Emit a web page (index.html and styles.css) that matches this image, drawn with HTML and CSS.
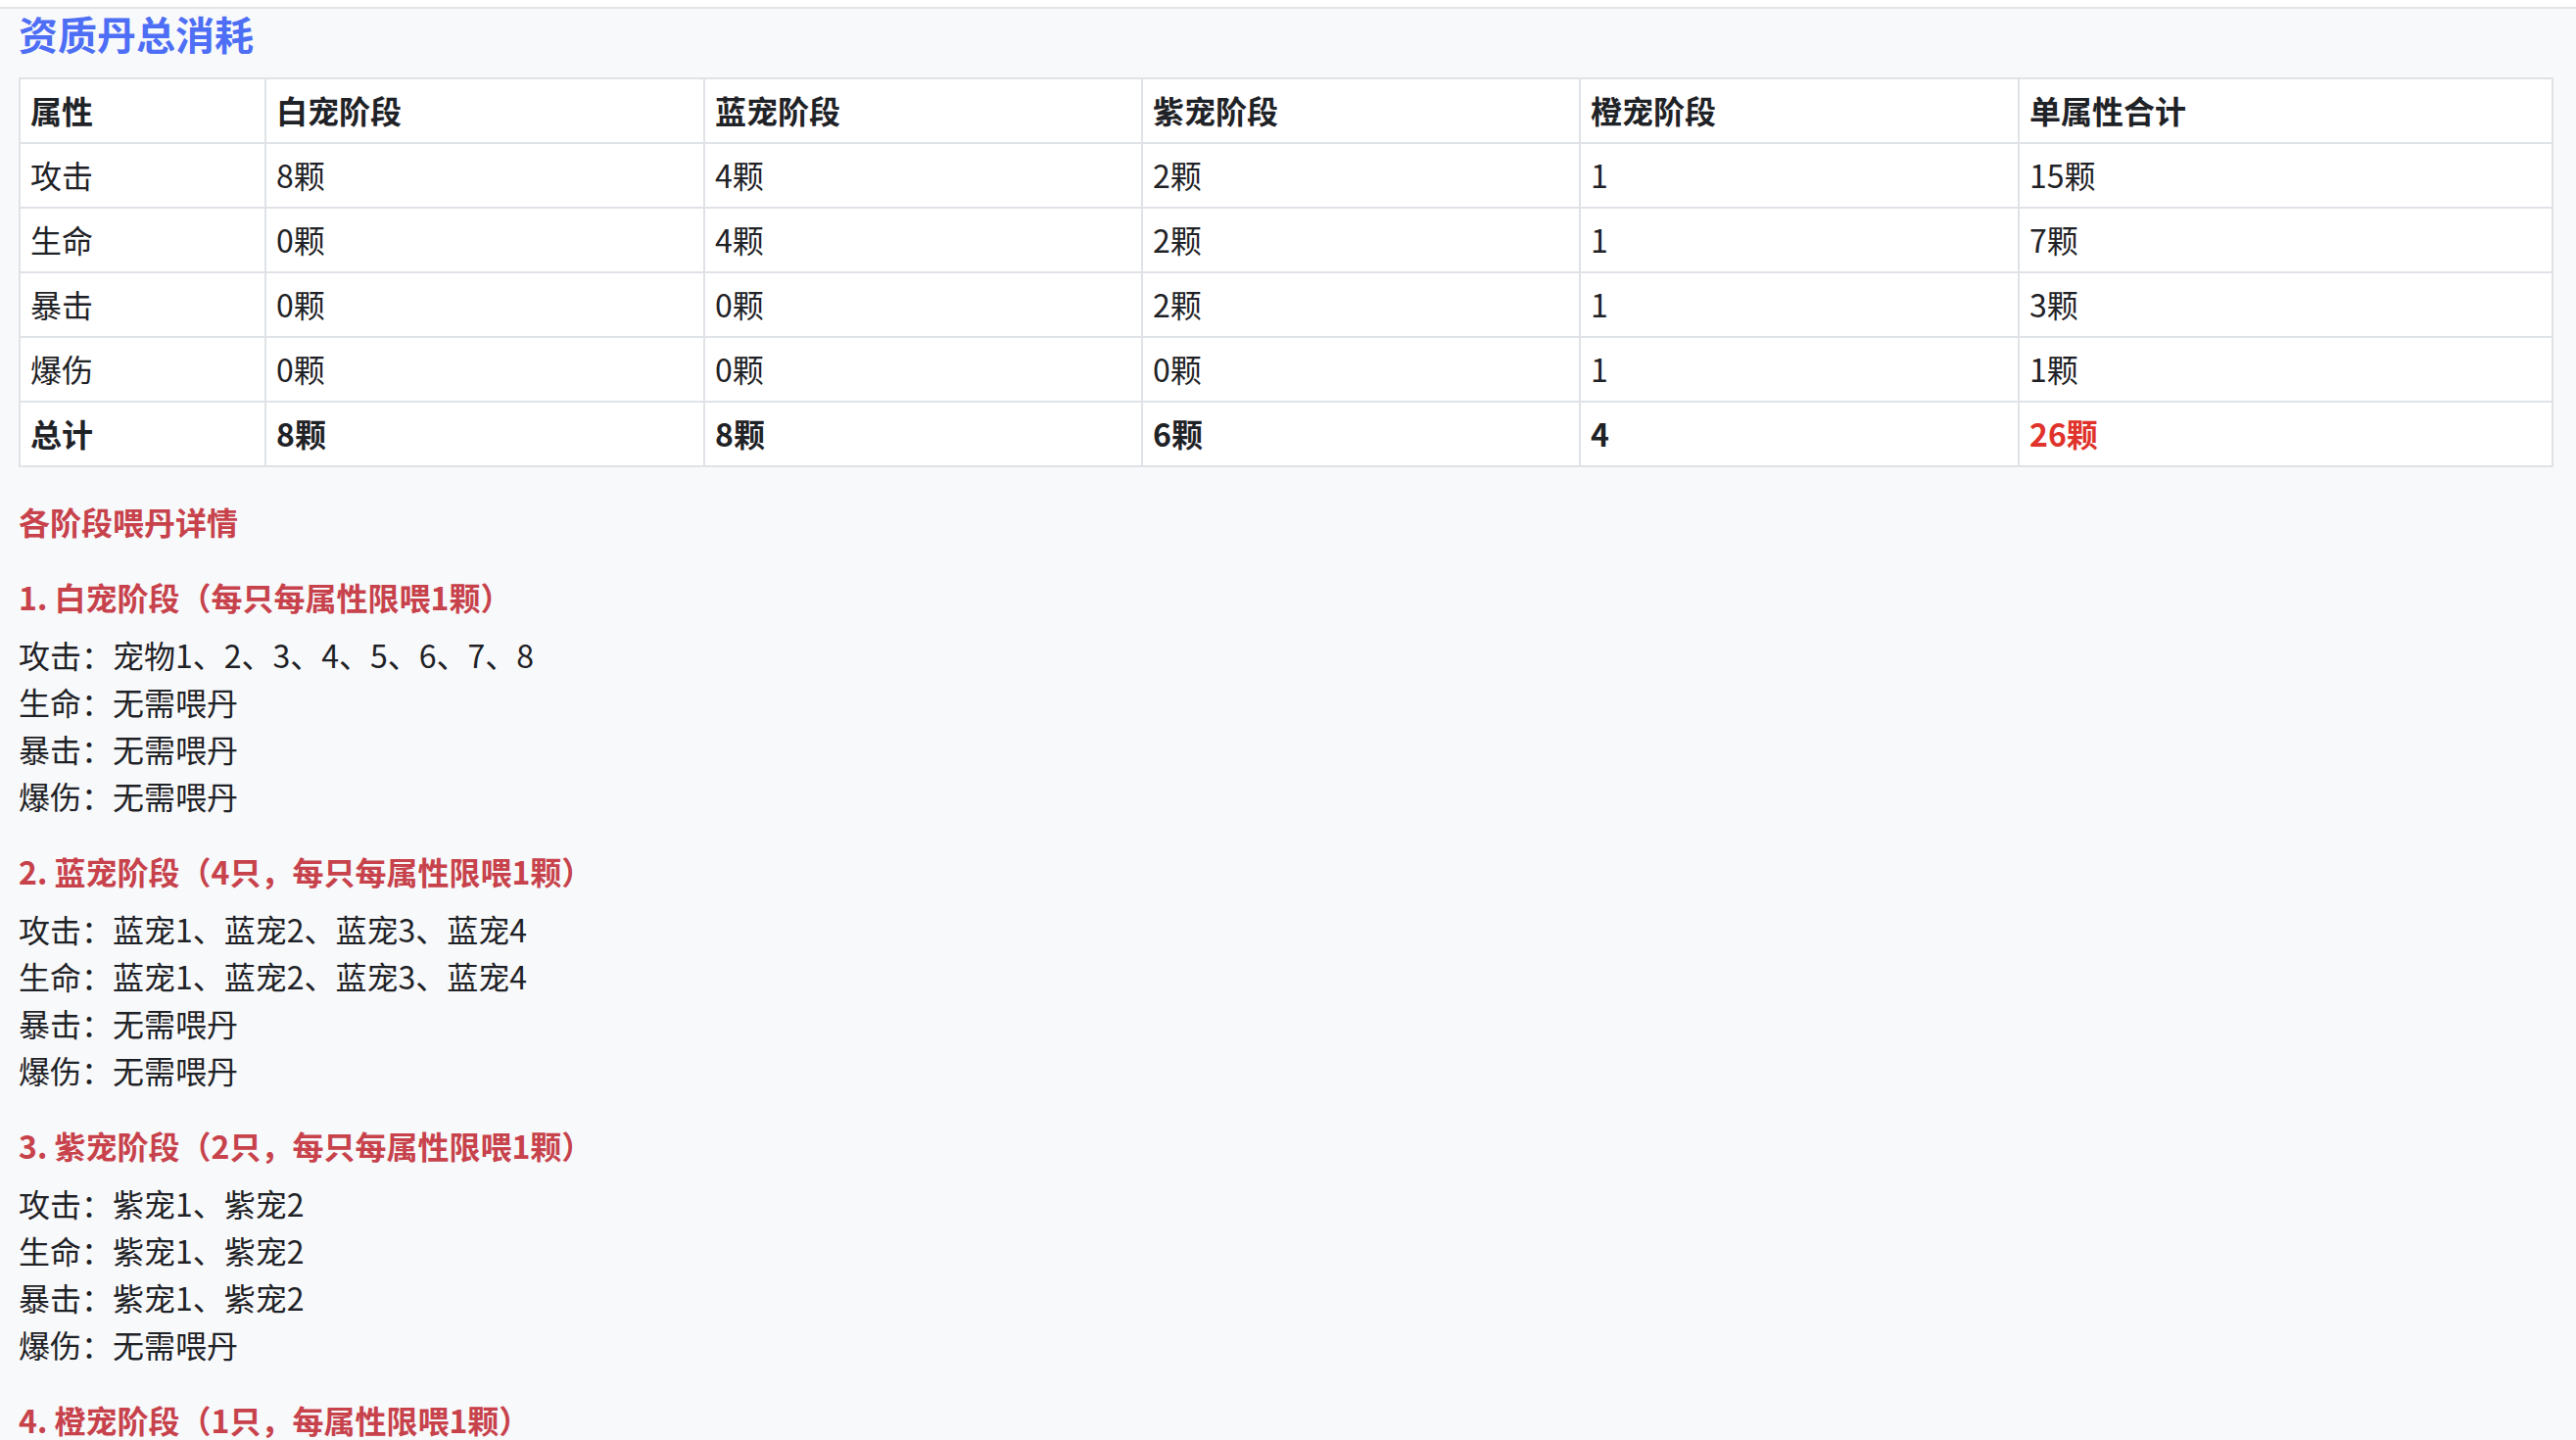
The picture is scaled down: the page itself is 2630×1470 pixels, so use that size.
FILE: index.html
```html
<!DOCTYPE html>
<html lang="zh-CN">
<head>
<meta charset="utf-8">
<title>资质丹总消耗</title>
<link rel="stylesheet" href="styles.css">
</head>
<body>
<div class="topbar"></div>
<main class="page">
  <h2 class="title">资质丹总消耗</h2>
  <table class="cost">
    <colgroup>
      <col class="c1"><col class="c2"><col class="c3"><col class="c4"><col class="c5"><col class="c6">
    </colgroup>
    <thead>
      <tr><th>属性</th><th>白宠阶段</th><th>蓝宠阶段</th><th>紫宠阶段</th><th>橙宠阶段</th><th>单属性合计</th></tr>
    </thead>
    <tbody>
      <tr><td>攻击</td><td>8颗</td><td>4颗</td><td>2颗</td><td>1</td><td>15颗</td></tr>
      <tr><td>生命</td><td>0颗</td><td>4颗</td><td>2颗</td><td>1</td><td>7颗</td></tr>
      <tr><td>暴击</td><td>0颗</td><td>0颗</td><td>2颗</td><td>1</td><td>3颗</td></tr>
      <tr><td>爆伤</td><td>0颗</td><td>0颗</td><td>0颗</td><td>1</td><td>1颗</td></tr>
      <tr class="total"><td>总计</td><td>8颗</td><td>8颗</td><td>6颗</td><td>4</td><td class="grand">26颗</td></tr>
    </tbody>
  </table>

  <h3 class="detail-title">各阶段喂丹详情</h3>

  <section class="stage">
    <h4 class="stage-title">1. 白宠阶段（每只每属性限喂1颗）</h4>
    <p class="line">攻击：宠物1、2、3、4、5、6、7、8</p>
    <p class="line">生命：无需喂丹</p>
    <p class="line">暴击：无需喂丹</p>
    <p class="line">爆伤：无需喂丹</p>
  </section>

  <section class="stage">
    <h4 class="stage-title">2. 蓝宠阶段（4只，每只每属性限喂1颗）</h4>
    <p class="line">攻击：蓝宠1、蓝宠2、蓝宠3、蓝宠4</p>
    <p class="line">生命：蓝宠1、蓝宠2、蓝宠3、蓝宠4</p>
    <p class="line">暴击：无需喂丹</p>
    <p class="line">爆伤：无需喂丹</p>
  </section>

  <section class="stage">
    <h4 class="stage-title">3. 紫宠阶段（2只，每只每属性限喂1颗）</h4>
    <p class="line">攻击：紫宠1、紫宠2</p>
    <p class="line">生命：紫宠1、紫宠2</p>
    <p class="line">暴击：紫宠1、紫宠2</p>
    <p class="line">爆伤：无需喂丹</p>
  </section>

  <section class="stage">
    <h4 class="stage-title">4. 橙宠阶段（1只，每属性限喂1颗）</h4>
  </section>
</main>
</body>
</html>
```

FILE: styles.css
```css
html {
  scrollbar-width: none;
}
html::-webkit-scrollbar {
  display: none;
}
body {
  margin: 0;
  background: #f8f9fb;
  color: #1f2226;
  font-family: "Noto Sans CJK SC", "Noto Sans", sans-serif;
  font-size: 32px;
  line-height: 48px;
}
.topbar {
  height: 7px;
  background: #ffffff;
  border-bottom: 2px solid #e2e4e8;
}
.page {
  padding: 0 23px 0 19px;
}
.title {
  margin: 1px 0 21px 0;
  font-size: 40px;
  line-height: 48px;
  font-weight: 700;
  color: #4d6ef5;
}
.cost {
  width: 2588px;
  table-layout: fixed;
  border-collapse: separate;
  border-spacing: 0;
  background: #ffffff;
  border-left: 2px solid #dfe2e6;
  border-top: 2px solid #dfe2e6;
}
.c1 { width: 251px; }
.c2 { width: 448px; }
.c3 { width: 447px; }
.c4 { width: 447px; }
.c5 { width: 448px; }
.c6 { width: 545px; }
.cost th,
.cost td {
  box-sizing: border-box;
  padding: 7px 10px 9px 10px;
  height: 66px;
  text-align: left;
  vertical-align: middle;
  border-right: 2px solid #dfe2e6;
  border-bottom: 2px solid #dfe2e6;
  line-height: 48px;
  white-space: nowrap;
}
.cost th {
  font-weight: 700;
}
.total td {
  font-weight: 700;
}
.cost .grand {
  color: #e0332b;
}
.detail-title {
  margin: 31px 0 0 0;
  font-size: 32px;
  line-height: 48px;
  font-weight: 700;
  color: #c7424b;
}
.stage {
  margin-top: 29px;
}
.stage-title {
  margin: 0 0 11px 0;
  font-size: 32px;
  line-height: 48px;
  font-weight: 700;
  color: #c7424b;
}
.line {
  margin: 0;
  line-height: 48px;
}
```
